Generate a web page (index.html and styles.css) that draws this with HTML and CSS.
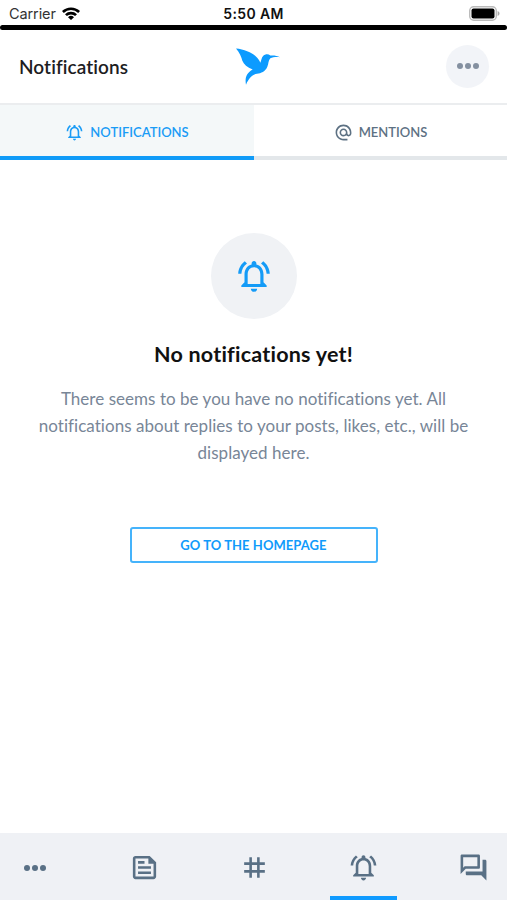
FILE: index.html
```html
<!DOCTYPE html>
<html lang="en">
<head>
<meta charset="utf-8">
<meta name="viewport" content="width=device-width, initial-scale=1">
<title>Notifications</title>
<link rel="stylesheet" href="styles.css">
</head>
<body>
<svg width="0" height="0" class="defs" aria-hidden="true">
  <symbol id="bell" viewBox="0 0 24 24"><path d="M12 22c1.100 0 2-.9 2-2h-4c0 1.100.9 2 2 2zm6-6v-5c0-3.070-1.630-5.640-4.500-6.320V4c0-.83-.67-1.500-1.500-1.500s-1.500.67-1.500 1.500v.68C7.640 5.360 6 7.920 6 11v5l-2 2v1h16v-1l-2-2zm-2 1H8v-6c0-2.480 1.510-4.500 4-4.500s4 2.020 4 4.500v6zM7.580 4.080L6.150 2.650C3.750 4.480 2.170 7.300 2.030 10.500h2c.15-2.650 1.510-4.970 3.550-6.420zm12.390 6.420h2c-.15-3.200-1.730-6.020-4.120-7.850l-1.420 1.430c2.020 1.450 3.390 3.770 3.540 6.420z"/></symbol>
</svg>
<div class="screen">
  <div class="status">
    <div class="carrier"><span>Carrier</span>
      <svg class="wifi" viewBox="0 0 18 13"><path d="M0 4.100a13 13 0 0 1 18 0L16.200 6a10.300 10.300 0 0 0-14.400 0zM3 7.200a8.700 8.700 0 0 1 12 0l-1.900 1.900a6 6 0 0 0-8.200 0zM6 10.200a4.400 4.400 0 0 1 6 0L9 13z"/></svg>
    </div>
    <div class="time">5:50 AM</div>
    <div class="power">
      <svg class="battery" viewBox="0 0 31 15"><rect x=".7" y=".7" width="26.600" height="13.600" rx="4" fill="#fff" stroke="#bbb" stroke-width="1.400"/><rect x="2.500" y="2.500" width="23" height="10" rx="2"/><path d="M28.600 5v5c1.200-.4 1.900-1.300 1.900-2.500S29.800 5.400 28.600 5z" fill="#aaa"/></svg>
    </div>
  </div>
  <div class="divider"></div>
  <header class="header">
    <h1 class="title">Notifications</h1>
    <svg class="bird" viewBox="32 29 132 110"><path d="M32 30C55 32 79 42 91 53C99 60 103 67 105 73C108 66 108 58 114 52C120 46 129 46 135 51C146 50 156 52 164 56C152 55 142 56 135 59C129 65 130 75 126 85C120 99 107 105 95 106C81 108 70 119 62 139C58 117 64 103 82 93C66 87 55 78 51 67C49 56 42 42 32 30z"/></svg>
    <button class="more" aria-label="More"><i></i><i></i><i></i></button>
  </header>
  <nav class="tabs">
    <div class="tab active"><svg class="icon-sm"><use href="#bell"/></svg><span>NOTIFICATIONS</span></div>
    <div class="tab"><svg class="icon-sm" viewBox="0 0 24 24"><path d="M12 1.950c-5.520 0-10 4.480-10 10s4.480 10 10 10h5v-2h-5c-4.340 0-8-3.660-8-8s3.660-8 8-8 8 3.660 8 8v1.430c0 .79-.71 1.570-1.500 1.570s-1.500-.78-1.500-1.570v-1.430c0-2.760-2.240-5-5-5s-5 2.240-5 5 2.240 5 5 5c1.380 0 2.640-.56 3.540-1.470.65.89 1.770 1.470 2.960 1.470 1.970 0 3.500-1.600 3.500-3.570v-1.430c0-5.520-4.480-10-10-10zm0 13c-1.660 0-3-1.340-3-3s1.340-3 3-3 3 1.340 3 3-1.340 3-3 3z"/></svg><span>MENTIONS</span></div>
  </nav>
  <main class="empty">
    <div class="circle"><svg class="icon-lg"><use href="#bell"/></svg></div>
    <h2 class="heading">No notifications yet!</h2>
    <p class="message">There seems to be you have no notifications yet. All<br>notifications about replies to your posts, likes, etc., will be<br>displayed here.</p>
    <button class="home">GO TO THE HOMEPAGE</button>
  </main>
  <footer class="bottom">
    <div class="item"><span class="dots"><i></i><i></i><i></i></span></div>
    <div class="item"><svg class="icon" viewBox="0 0 24 24"><path d="M16 3H5c-1.100 0-2 .9-2 2v14c0 1.100.9 2 2 2h14c1.100 0 2-.9 2-2V8l-5-5zm3 16H5V5h10v4h4v10zM7 17h10v-2H7v2zm5-10H7v2h5V7zm-5 6h10v-2H7v2z"/></svg></div>
    <div class="item"><svg class="icon" viewBox="0 0 24 24"><path d="M20 10V8h-4V4h-2v4h-4V4H8v4H4v2h4v4H4v2h4v4h2v-4h4v4h2v-4h4v-2h-4v-4h4zm-6 4h-4v-4h4v4z"/></svg></div>
    <div class="item current"><svg class="icon"><use href="#bell"/></svg></div>
    <div class="item"><svg class="icon" viewBox="0 0 24 24"><path d="M15 4v7H5.170L4 12.170V4h11m1-2H3c-.55 0-1 .45-1 1v14l4-4h10c.55 0 1-.45 1-1V3c0-.55-.45-1-1-1zm5 4h-2v9H6v2c0 .55.45 1 1 1h11l4 4V7c0-.55-.45-1-1-1z"/></svg></div>
  </footer>
</div>
</body>
</html>
```
FILE: styles.css
```css
* { box-sizing: border-box; }
body { margin: 0; background: #fff; font-family: Lato, "Liberation Sans", sans-serif; font-variant-ligatures: none; }
h1, h2, p { margin: 0; }
button { font-family: inherit; padding: 0; }
svg { fill: currentColor; display: block; flex: none; }
.defs { position: absolute; }
.screen { width: 507px; height: 900px; display: flex; flex-direction: column; overflow: hidden; }
.status { height: 25px; display: grid; grid-template-columns: 1fr auto 1fr; align-items: center; padding: 2px 7px 0 9px; font-family: Inter, "Liberation Sans", sans-serif; font-size: 14px; color: #111; }
.carrier { display: flex; align-items: center; gap: 6px; font-size: 14.500px; letter-spacing: -.1px; color: #333; }
.wifi { width: 18px; height: 13px; color: #000; }
.time { font-weight: 600; letter-spacing: .35px; margin-right: 2px; }
.power { display: flex; justify-content: flex-end; }
.battery { width: 31px; height: 15px; color: #000; }
.divider { height: 5px; background: #000; border-radius: 3px; }
.header { height: 75px; display: grid; grid-template-columns: 1fr 44px 1fr; align-items: center; padding: 0 18px; border-bottom: 2px solid #ebedef; }
.title { padding-left: 1px; font-size: 19px; font-weight: 600; letter-spacing: .08px; color: #1d1d1f; }
.bird { width: 44px; height: 37px; margin-left: 4px; margin-top: -1px; color: #0c9bff; }
.more { justify-self: end; width: 43px; height: 43px; margin-top: -1px; border: 0; border-radius: 50%; background: #f2f4f8; display: flex; align-items: center; justify-content: center; gap: 2px; color: #8490a0; }
.more i { width: 6px; height: 6px; border-radius: 50%; background: currentColor; }
.tabs { height: 55px; display: grid; grid-template-columns: 254px 1fr; }
.tab { display: flex; align-items: center; justify-content: center; gap: 6px; padding-top: 3px; color: #5d7183; font-size: 13px; font-weight: 600; border-bottom: 4px solid #e3e7ea; }
.tab.active { color: #1a9cf6; background: #f4f8f9; border-bottom-color: #109bf8; }
.icon-sm { width: 19px; height: 19px; }
.empty { flex: 1; display: flex; flex-direction: column; align-items: center; padding-top: 73px; }
.circle { width: 86px; height: 86px; border-radius: 50%; background: #f0f2f5; display: flex; align-items: center; justify-content: center; color: #149bf7; }
.icon-lg { width: 38px; height: 38px; }
.heading { margin-top: 21px; font-size: 21.500px; line-height: 28px; font-weight: 700; letter-spacing: .22px; color: #111; }
.message { margin-top: 17px; text-align: center; white-space: nowrap; font-size: 17px; line-height: 27px; letter-spacing: .04px; color: #788697; }
.home { margin-top: 61px; width: 248px; height: 36px; background: #fff; border: 2px solid #45b3fb; border-radius: 3px; font-size: 13px; font-weight: 700; letter-spacing: .06px; color: #109bfb; }
.bottom { height: 67px; background: #eff1f5; display: grid; grid-template-columns: repeat(5, 67px); justify-content: space-between; padding: 0 0 0 1px; color: #597085; }
.item { display: flex; align-items: center; justify-content: center; border-bottom: 4px solid transparent; padding-top: 6px; }
.item.current { border-bottom-color: #109bff; }
.icon { width: 31px; height: 31px; }
.dots { display: flex; gap: 2px; }
.dots i { width: 6px; height: 6px; border-radius: 50%; background: currentColor; }
```
